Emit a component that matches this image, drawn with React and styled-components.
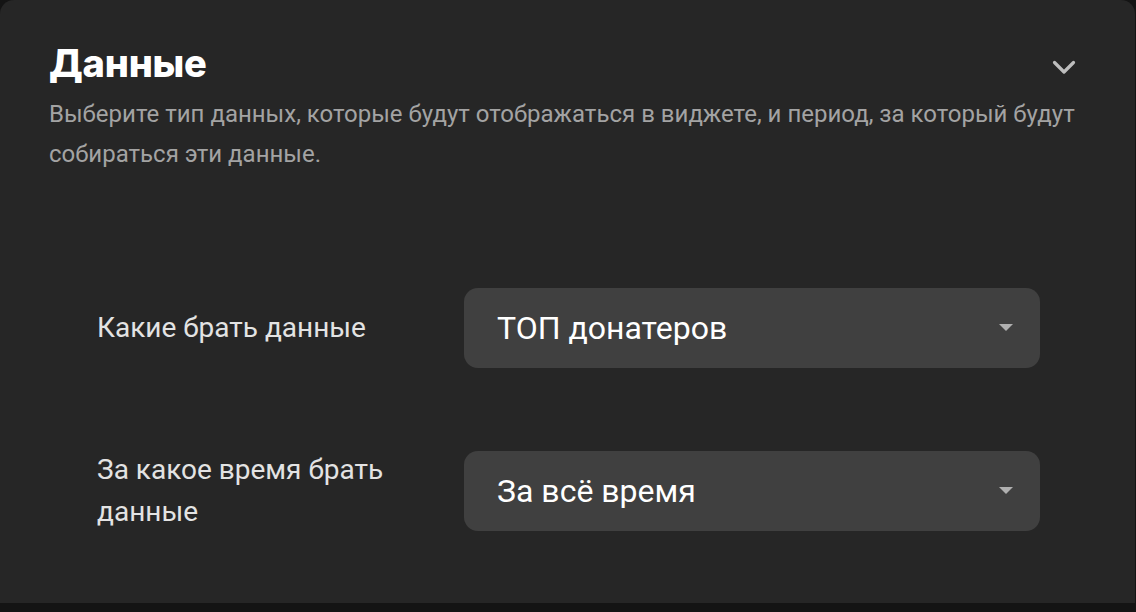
import React from "react";
import styled, { createGlobalStyle } from "styled-components";

const Global = createGlobalStyle`
  html, body { margin: 0; padding: 0; background: #141414; }
  body { font-family: Roboto, "Noto Sans", sans-serif; -webkit-font-smoothing: antialiased; }
  * { box-sizing: border-box; }
`;

const Panel = styled.section`
  width: 1135px;
  height: 603px;
  background: #262626;
  border-radius: 14px 14px 0 0;
  padding: 39px 57px 0 49px;
`;

const Header = styled.div`
  display: flex;
  align-items: flex-start;
  justify-content: space-between;
`;

const Title = styled.h2`
  margin: 0;
  font-family: Inter, sans-serif;
  font-weight: 800;
  font-size: 38px;
  line-height: 48px;
  letter-spacing: -0.2px;
  color: #ffffff;
`;

const Toggle = styled.button`
  background: none;
  border: 0;
  padding: 0;
  margin-top: 16px;
  width: 28px;
  height: 24px;
  display: flex;
  align-items: center;
  justify-content: center;
  color: #bdbdbd;
  cursor: pointer;
`;

const Description = styled.p`
  margin: 7px 0 0;
  font-size: 24px;
  line-height: 40px;
  color: #a3a3a3;
  max-width: 1040px;
`;

const Form = styled.div`
  margin: 114px 0 0 48px;
  width: 943px;
  display: flex;
  flex-direction: column;
  gap: 81px;
`;

const Row = styled.div`
  display: grid;
  grid-template-columns: 367px 1fr;
  align-items: center;
`;

const Label = styled.label`
  font-size: 28px;
  line-height: 42px;
  color: #e3e3e3;
  max-width: 300px;
`;

const Select = styled.div`
  height: 80px;
  border-radius: 14px;
  background: #404040;
  display: flex;
  align-items: center;
  justify-content: space-between;
  padding: 0 27px 0 33px;
  font-size: 32px;
  color: #ffffff;
`;

const Caret = styled.span`
  width: 0;
  height: 0;
  border-left: 7px solid transparent;
  border-right: 7px solid transparent;
  border-top: 7px solid #b0b0b0;
  margin-top: -1px;
`;

function Chevron() {
  return (
    <svg width="26" height="16" viewBox="0 0 26 16" fill="none">
      <path d="M3.5 3.5l9.5 9.5l9.5-9.5" stroke="currentColor" strokeWidth="3.2" strokeLinecap="round" strokeLinejoin="round" />
    </svg>
  );
}

function Field({ label, value }) {
  return (
    <Row>
      <Label>{label}</Label>
      <Select>
        <span>{value}</span>
        <Caret />
      </Select>
    </Row>
  );
}

export default function App() {
  return (
    <>
      <Global />
      <Panel>
        <Header>
          <Title>Данные</Title>
          <Toggle aria-label="Свернуть">
            <Chevron />
          </Toggle>
        </Header>
        <Description>
          Выберите тип данных, которые будут отображаться в виджете, и период, за который будут собираться эти данные.
        </Description>
        <Form>
          <Field label="Какие брать данные" value="ТОП донатеров" />
          <Field label="За какое время брать данные" value="За всё время" />
        </Form>
      </Panel>
    </>
  );
}
